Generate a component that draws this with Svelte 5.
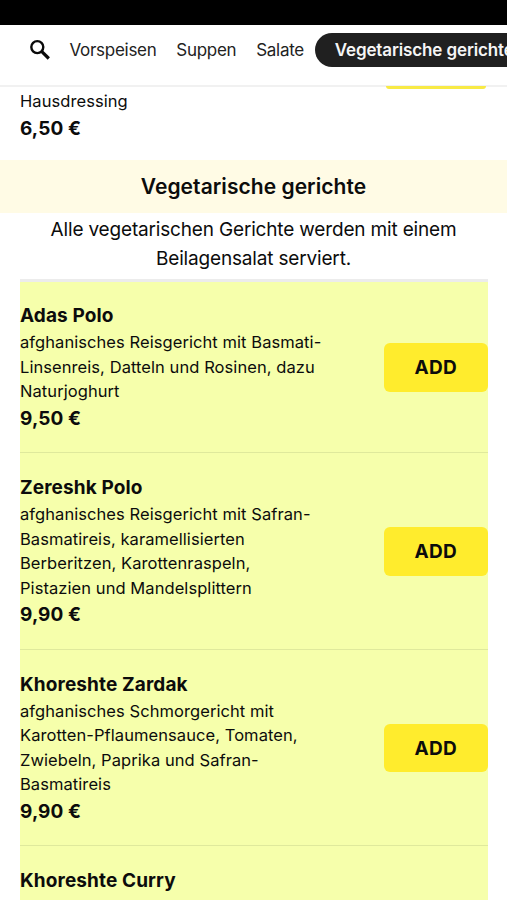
<script lang="ts">
	const tabs = ['Vorspeisen', 'Suppen', 'Salate'];

	const dishes = [
		{
			name: 'Adas Polo',
			lines: ['afghanisches Reisgericht mit Basmati-', 'Linsenreis, Datteln und Rosinen, dazu', 'Naturjoghurt'],
			price: '9,50 €'
		},
		{
			name: 'Zereshk Polo',
			lines: ['afghanisches Reisgericht mit Safran-', 'Basmatireis, karamellisierten', 'Berberitzen, Karottenraspeln,', 'Pistazien und Mandelsplittern'],
			price: '9,90 €'
		},
		{
			name: 'Khoreshte Zardak',
			lines: ['afghanisches Schmorgericht mit', 'Karotten-Pflaumensauce, Tomaten,', 'Zwiebeln, Paprika und Safran-', 'Basmatireis'],
			price: '9,90 €'
		},
		{ name: 'Khoreshte Curry', lines: [], price: '' }
	];
</script>

<div class="screen">
	<div class="status"></div>
	<nav>
		<button class="search" aria-label="Suche">
			<svg width="22" height="22" viewBox="0 0 22 22" fill="none" stroke="#0a0a0a">
				<circle cx="8.3" cy="8.1" r="6" stroke-width="2.4" />
				<path d="M12.6 12.4l7.2 7.1" stroke-width="3.2" />
			</svg>
		</button>
		{#each tabs as tab}
			<a href="#{tab}"><span>{tab}</span></a>
		{/each}
		<a class="active" href="#vegetarisch"><span>Vegetarische gerichte</span></a>
	</nav>

	<section class="previous">
		<div class="info">
			<p>Hausdressing</p>
			<strong>6,50 €</strong>
		</div>
		<div class="cut"></div>
	</section>

	<h2>Vegetarische gerichte</h2>
	<p class="intro">Alle vegetarischen Gerichte werden mit einem<br />Beilagensalat serviert.</p>

	<ul>
		{#each dishes as dish}
			<li>
				<div class="info">
					<h3>{dish.name}</h3>
					{#each dish.lines as line}
						<p><span>{line}</span></p>
					{/each}
					<strong>{dish.price}</strong>
				</div>
				{#if dish.price}
					<button class="add">ADD</button>
				{/if}
			</li>
		{/each}
	</ul>
</div>

<style>
	:global(body) {
		background: #fff;
	}

	.screen {
		width: 507px;
		height: 900px;
		overflow: hidden;
		background: #fff;
		color: #0c0c0c;
		font-family: Inter, 'Liberation Sans', sans-serif;
	}

	.status {
		height: 25px;
		background: #000;
	}

	nav {
		display: flex;
		align-items: center;
		box-sizing: border-box;
		height: 62px;
		padding: 0 0 11px 29px;
		border-bottom: 2px solid #f1f1f1;
		white-space: nowrap;
	}

	.search {
		display: flex;
		width: 22px;
		padding: 0;
		margin-right: 18.5px;
		border: 0;
		background: none;
	}

	nav a {
		flex: none;
		margin-right: 19.8px;
		font-size: 17px;
		letter-spacing: -0.28px;
		color: #222;
		text-decoration: none;
	}

	nav .active {
		margin: 0 0 0 -9px;
		padding: 0 20px;
		border-radius: 17px;
		background: #202020;
		color: #f5f5f5;
		font-weight: 600;
		letter-spacing: -0.12px;
		line-height: 34px;
	}

	.previous {
		display: flex;
		justify-content: space-between;
		height: 73px;
		padding: 0 21px 0 20px;
	}

	.previous .info {
		padding-top: 2px;
	}

	/* lower edge of the button scrolled under the nav */
	.cut {
		width: 100px;
		height: 3px;
		margin-top: -1px;
		border-radius: 0 0 5px 5px;
		background: #f8ea45;
	}

	h2 {
		margin: 0;
		background: #fffbe5;
		font-size: 21px;
		font-weight: 600;
		letter-spacing: 0.05px;
		line-height: 53px;
		text-align: center;
	}

	.intro {
		height: 66px;
		margin: 0;
		padding-top: 2px;
		box-sizing: border-box;
		font-size: 19px;
		letter-spacing: -0.17px;
		line-height: 29px;
		text-align: center;
	}

	ul {
		margin: 0 19px 0 20px;
		padding: 0;
		border-top: 3px solid #ececec;
		list-style: none;
	}

	li {
		display: flex;
		align-items: center;
		justify-content: space-between;
		padding: 20px 0 19.6px;
		border-bottom: 1px solid #dfe99c;
		background: #f6ffab;
	}

	li:not(:first-child) {
		padding: 21px 0 19.6px;
	}

	h3 {
		margin: 0;
		font-size: 19px;
		font-weight: 650;
		letter-spacing: 0.12px;
		line-height: 28px;
	}

	.info p {
		margin: 0;
		font-size: 16.5px;
		letter-spacing: 0.07px;
		line-height: 24.5px;
		white-space: nowrap;
	}

	.info strong {
		display: block;
		font-size: 19px;
		font-weight: 650;
		letter-spacing: 0.1px;
		line-height: 29px;
	}

	.add {
		width: 104.5px;
		height: 48.5px;
		padding: 0;
		border: 0;
		border-radius: 6px;
		background: #ffec2d;
		color: #0c0c0c;
		font: 700 19px Inter, sans-serif;
		letter-spacing: 0.3px;
	}
</style>
